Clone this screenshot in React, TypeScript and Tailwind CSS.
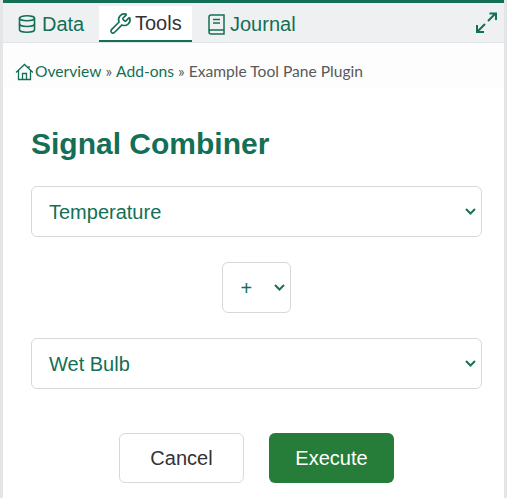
import { Database, Wrench } from 'lucide-react';

function Chevron() {
  return (
    <svg width="11" height="7" viewBox="0 0 11 7" fill="none" stroke="#1c7058" strokeWidth="2">
      <path d="M1 1l4.5 4.5L10 1" />
    </svg>
  );
}

function ExpandIcon() {
  return (
    <svg width="21" height="21" viewBox="0 0 21 21" fill="none" stroke="#136f55" strokeWidth="2">
      <path d="M12 9l7-7M13.500 1.500h6.500v6.500M9 12l-7 7M1 13v7h7" />
    </svg>
  );
}

function HomeIcon() {
  return (
    <svg width="19" height="18" viewBox="0 0 19 18" fill="none" stroke="#136f55" strokeWidth="1.300">
      <path d="M1 9.500L9.500 1.500 18 9.500M3.500 7.500V16.500H15.500V7.500M7.500 16.500V10.500H11.500V16.500M14 3V6" />
    </svg>
  );
}

function JournalIcon() {
  return (
    <svg width="20" height="21" viewBox="0 0 20 21" fill="none" stroke="#136f55" strokeWidth="1.500">
      <path d="M3 17V3a2 2 0 0 1 2-2h13v15H5a2 2 0 0 0-2 2 2 2 0 0 0 2 2h13v-4M7 5.500h7M7 9h7" />
    </svg>
  );
}

function SignalSelect({ label }: { label: string }) {
  return (
    <div className="flex h-[51px] items-center justify-between rounded-md border border-[#d8d8d8] bg-white pl-[17px] pr-[5px] text-[20px] text-[#136f55]">
      <span>{label}</span>
      <Chevron />
    </div>
  );
}

export default function App() {
  return (
    <div className="flex h-[498px] w-[507px] flex-col overflow-hidden border-x-[3px] border-[#e4e5e7] bg-white font-['Liberation_Sans',sans-serif]">
      <div className="-mx-[3px] h-[3px] shrink-0 bg-[#136f55]" />

      {/* Tabs */}
      <div className="flex h-[40px] shrink-0 items-start border-b border-[#e2e3e5] bg-[#eff0f2] pt-[3px] text-[20px] text-[#136f55]">
        <div className="flex h-[36px] w-[96px] items-center gap-[5px] pl-[14px]">
          <Database size={20} strokeWidth={1.9} />
          <span>Data</span>
        </div>
        <div className="flex h-[36px] w-[93px] items-center gap-[3px] border-b-2 border-[#136f55] bg-white pl-[10px] text-[#333]">
          <Wrench size={23} strokeWidth={1.7} className="text-[#136f55]" />
          <span>Tools</span>
        </div>
        <div className="flex h-[36px] items-center gap-[4px] pl-[14px]">
          <JournalIcon />
          <span>Journal</span>
        </div>
        <div className="ml-auto mr-[7px] mt-[6px]">
          <ExpandIcon />
        </div>
      </div>

      {/* Breadcrumbs */}
      <div className="flex h-[45px] shrink-0 items-center bg-[#fdfdfd] pb-[2px] pl-[12px] pt-[14px] font-['Lato',sans-serif] text-[15.600px] text-[#595959]">
        <HomeIcon />
        <span className="ml-[1px] text-[#136f55]">Overview</span>
        <span className="mx-[4px]">»</span>
        <span className="text-[#136f55]">Add-ons</span>
        <span className="mx-[4px]">»</span>
        <span>Example Tool Pane Plugin</span>
      </div>

      {/* Form */}
      <div className="flex flex-1 flex-col rounded-tl-lg bg-white pl-[28px] pr-[22px]">
        <h1 className="mt-[38px] text-[30px] leading-[36px] font-bold text-[#136f55]">Signal Combiner</h1>
        <div className="mt-[24px]">
          <SignalSelect label="Temperature" />
        </div>
        <div className="mt-[25px] flex justify-center">
          <div className="ml-[-1px] flex h-[51px] w-[69px] items-center rounded-md border border-[#d8d8d8] pl-[18px] text-[20px] text-[#136f55]">
            <span className="w-[33px]">+</span>
            <Chevron />
          </div>
        </div>
        <div className="mt-[25px]">
          <SignalSelect label="Wet Bulb" />
        </div>
        <div className="mt-[44px] flex justify-center gap-[25px] text-[20px]">
          <button className="h-[50px] w-[125px] rounded-md border border-[#d8d8d8] bg-white text-[#333]">Cancel</button>
          <button className="h-[50px] w-[125px] rounded-md bg-[#267d39] text-white">Execute</button>
        </div>
      </div>
    </div>
  );
}
